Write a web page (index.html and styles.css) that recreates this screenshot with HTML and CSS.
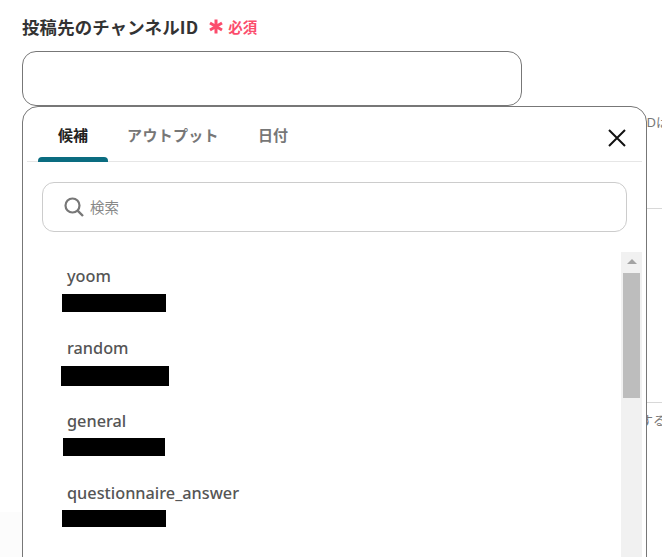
FILE: index.html
```html
<!DOCTYPE html>
<html>
	<head>
		<meta charset="UTF-8">
		<title></title>
		<link rel="stylesheet" href="styles.css">
	</head>
	<body>
		<div class="page">
			<div class="label">
				<span class="label-text">投稿先のチャンネルID</span>
				<svg class="star" width="14" height="15" viewBox="0 0 14 15">
					<path d="M7 0.5V14.5M1 4L13 11M13 4L1 11" stroke="#fb4c6c" stroke-width="3" fill="none"/>
				</svg>
				<span class="must">必須</span>
			</div>
			<div class="input"></div>
			<div class="behind">
				<div class="note note-top">IDは</div>
				<div class="rule rule-top"></div>
				<div class="rule rule-bottom"></div>
				<div class="note note-bottom">する</div>
			</div>
			<div class="shade"></div>

			<div class="pop">
				<div class="tabs">
					<span class="tab on">候補</span>
					<span class="tab">アウトプット</span>
					<span class="tab">日付</span>
					<svg class="close" width="20" height="20" viewBox="0 0 20 20">
						<path d="M2 2L18 18M18 2L2 18" stroke="#111" stroke-width="2" fill="none"/>
					</svg>
				</div>
				<div class="search">
					<svg width="20" height="20" viewBox="0 0 20 20">
						<circle cx="8.5" cy="8.5" r="7" stroke="#777" stroke-width="2.2" fill="none"/>
						<path d="M13.6 13.6L19 19" stroke="#777" stroke-width="2.4" fill="none"/>
					</svg>
					<span class="search-text">検索</span>
				</div>
				<div class="body">
					<ul class="list">
						<li>
							<div class="name">yoom</div>
							<div class="mask m1"></div>
						</li>
						<li>
							<div class="name">random</div>
							<div class="mask m2"></div>
						</li>
						<li>
							<div class="name">general</div>
							<div class="mask m3"></div>
						</li>
						<li>
							<div class="name">questionnaire_answer</div>
							<div class="mask m4"></div>
						</li>
					</ul>
					<div class="bar">
						<div class="arrow"></div>
						<div class="thumb"></div>
					</div>
				</div>
			</div>
		</div>
	</body>
</html>
```
FILE: styles.css
```css
*{
	padding:0;
	margin:0;
	box-sizing:border-box;
}
ul,li{
	list-style:none;
}
html,body{
	height:100%;
	overflow:hidden;
	background:#fff;
}
body{
	font-family:"Noto Sans","Noto Sans CJK JP",sans-serif;
}
.page{
	height:557px;
	padding:14px 0 0 22px;
	position:relative;
	overflow:hidden;
}
.label{
	display:flex;
	align-items:center;
	height:24px;
	font-family:"Noto Sans CJK JP",sans-serif;
}
.label-text{
	font-size:17.4px;
	font-weight:700;
	color:#333;
	letter-spacing:.2px;
}
.star{
	margin:1px 0 0 11px;
}
.must{
	margin-left:5px;
	font-size:14.5px;
	font-weight:700;
	color:#fb4c6c;
}
.input{
	width:500px;
	height:55px;
	margin-top:13px;
	border:1px solid #777;
	border-radius:14px;
	background:#fff;
}

/* 后面的表单，只露出一点 */
.behind{
	position:absolute;
	left:640px;
	top:0;
	width:22px;
	height:557px;
	color:#777;
	font-size:13px;
}
.note{
	position:absolute;
	left:2px;
	white-space:nowrap;
}
.note-top{
	top:112px;
}
.note-bottom{
	top:410px;
	left:0;
}
.rule{
	position:absolute;
	left:0;
	width:22px;
	height:1px;
	background:#d8d8d8;
}
.rule-top{
	top:208px;
}
.rule-bottom{
	top:402px;
}
.shade{
	position:absolute;
	left:0;
	top:512px;
	width:22px;
	height:45px;
	background:#fcfcfc;
}

.pop{
	position:absolute;
	left:22px;
	top:106px;
	width:625px;
	height:470px;
	background:#fff;
	border:1px solid #777;
	border-radius:16px;
}
.tabs{
	display:flex;
	align-items:center;
	height:55px;
	margin:0 4px;
	padding-left:11px;
	border-bottom:1px solid #e6e6e6;
	position:relative;
}
.tab{
	width:70px;
	height:55px;
	line-height:55px;
	margin-right:19px;
	text-align:center;
	font-size:15px;
	font-weight:700;
	color:#777;
	font-family:"Noto Sans CJK JP",sans-serif;
	white-space:nowrap;
	position:relative;
}
.tab:nth-child(2){
	width:92px;
	letter-spacing:.3px;
	margin-right:39px;
}
.tab:nth-child(3){
	width:30px;
}
.tab.on{
	color:#222;
}
.tab.on:after{
	content:"";
	position:absolute;
	left:0;
	right:0;
	bottom:0;
	height:5px;
	background:#0a6c80;
	border-radius:4px 4px 0 0;
}
.close{
	position:absolute;
	right:15px;
	top:21px;
}
.search{
	display:flex;
	align-items:center;
	width:585px;
	height:50px;
	margin:20px 0 0 19px;
	padding-left:21px;
	border:1px solid #ccc;
	border-radius:12px;
}
.search-text{
	margin:-1px 0 0 6px;
	font-size:14.5px;
	color:#888;
	font-family:"Noto Sans CJK JP",sans-serif;
}
.body{
	display:flex;
	justify-content:space-between;
	height:320px;
	margin-top:20px;
	padding-right:4px;
}
.list{
	padding:13px 0 0 39px;
}
.list li{
	height:72px;
}
.list li:nth-child(3){
	padding-top:1px;
}
.list li:nth-child(4){
	padding-top:1px;
}
.name{
	height:22px;
	line-height:22px;
	margin-left:5px;
	font-size:16.3px;
	font-weight:500;
	color:#555;
}
.mask{
	background:#000;
	height:18px;
	margin-top:7px;
	width:104px;
}
.m2{
	width:108px;
	height:20px;
	margin-left:-1px;
}
.m3{
	width:102px;
	margin-top:6px;
	margin-left:1px;
}
.m4{
	height:17px;
	margin-top:6px;
}
.bar{
	width:21px;
	background:#f1f1f1;
	padding:0 2px;
}
.arrow{
	width:0;
	height:0;
	margin:7px auto 0;
	border-left:5px solid transparent;
	border-right:5px solid transparent;
	border-bottom:5px solid #a3a3a3;
}
.thumb{
	height:125px;
	margin-top:9px;
	background:#bdbdbd;
}
```
